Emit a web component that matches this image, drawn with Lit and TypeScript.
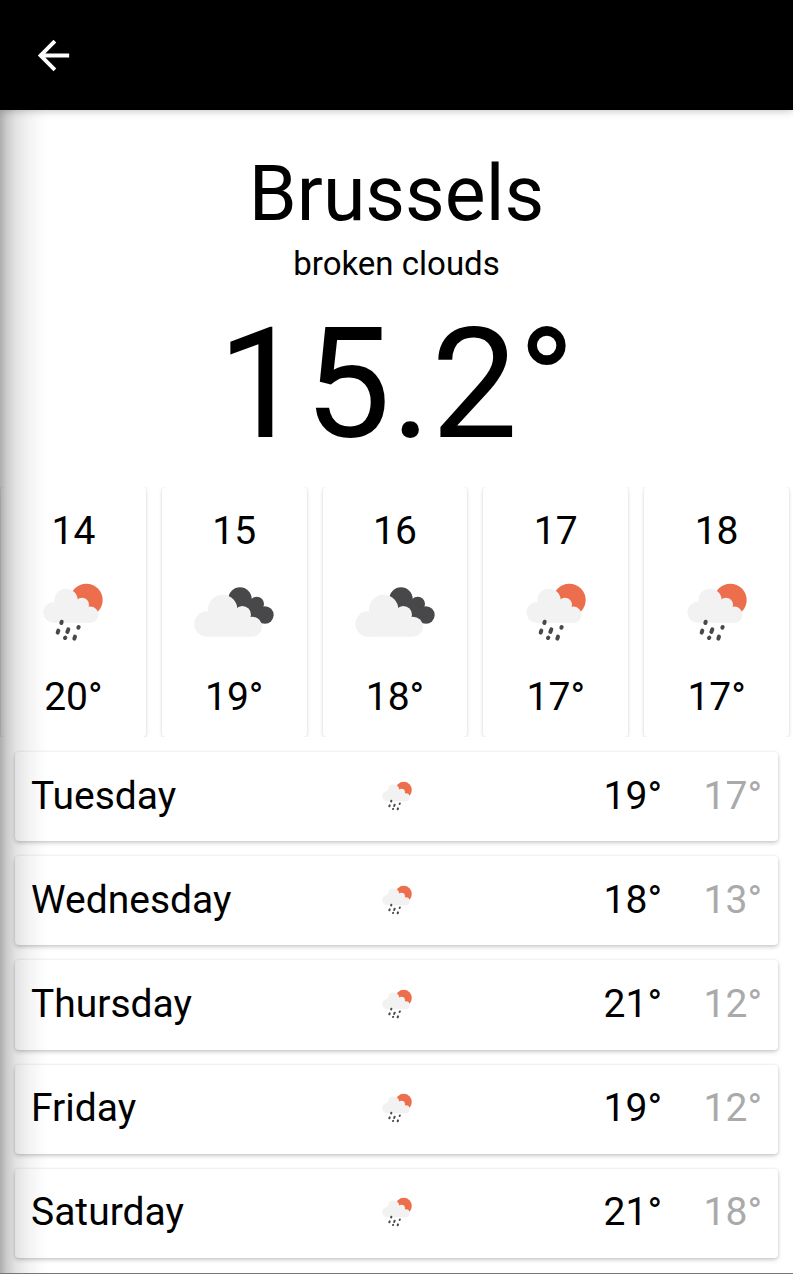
import { LitElement, html, css, svg } from "lit";
import { customElement, property } from "lit/decorators.js";

type Condition = "rain" | "clouds";

interface Hour {
  hour: string;
  condition: Condition;
  temp: string;
}

interface Day {
  name: string;
  condition: Condition;
  high: string;
  low: string;
}

const HOURS: Hour[] = [
  { hour: "14", condition: "rain", temp: "20°" },
  { hour: "15", condition: "clouds", temp: "19°" },
  { hour: "16", condition: "clouds", temp: "18°" },
  { hour: "17", condition: "rain", temp: "17°" },
  { hour: "18", condition: "rain", temp: "17°" },
];

const DAYS: Day[] = [
  { name: "Tuesday", condition: "rain", high: "19°", low: "17°" },
  { name: "Wednesday", condition: "rain", high: "18°", low: "13°" },
  { name: "Thursday", condition: "rain", high: "21°", low: "12°" },
  { name: "Friday", condition: "rain", high: "19°", low: "12°" },
  { name: "Saturday", condition: "rain", high: "21°", low: "18°" },
];

@customElement("weather-icon")
export class WeatherIcon extends LitElement {
  @property() condition: Condition = "rain";

  static styles = css`
    :host {
      display: block;
      width: 80px;
      aspect-ratio: 4 / 3;
    }
    .icon {
      display: block;
      width: 100%;
      height: 100%;
    }
    .sun {
      fill: #ec6e4c;
    }
    .cloud {
      fill: #f2f2f2;
    }
    .dark {
      fill: #48484a;
    }
    .drops {
      fill: none;
      stroke: #48484a;
      stroke-width: 12;
      stroke-linecap: round;
    }
  `;

  // Sun behind a cloud, with drops below it.
  private rain() {
    return svg`
      <circle class="sun" cx="160" cy="54" r="49"></circle>
      <g class="cloud">
        <circle cx="62" cy="91" r="31"></circle>
        <circle cx="99" cy="55" r="35"></circle>
        <circle cx="147" cy="68" r="21"></circle>
        <circle cx="172" cy="98" r="24.500"></circle>
        <path d="M62 122H172V90L150 60L120 50L80 60L62 75Z"></path>
      </g>
      <path class="drops" d="M86 119l-1 4M76 146l-2 6M106 142l-3 8M137 135l-1 2M97 167l-1 1M126 164l-2 6"></path>
    `;
  }

  // Dark cloud behind a light one.
  private clouds() {
    return svg`
      <g class="dark">
        <circle cx="138" cy="51" r="35"></circle>
        <circle cx="188" cy="66" r="22"></circle>
        <circle cx="213" cy="99" r="26"></circle>
        <path d="M138 51L168 58L188 66L213 99L204 124L170 112L138 80Z"></path>
      </g>
      <g class="cloud">
        <circle cx="39" cy="126" r="38"></circle>
        <circle cx="86" cy="82" r="44"></circle>
        <circle cx="145" cy="98" r="26"></circle>
        <circle cx="174" cy="134" r="30"></circle>
        <path d="M39 164H174V124L148 88L112 76L62 88L39 106Z"></path>
      </g>
    `;
  }

  render() {
    return html`
      <svg class="icon" viewBox="0 0 240 180" aria-hidden="true">
        ${this.condition === "rain" ? this.rain() : this.clouds()}
      </svg>
    `;
  }
}

@customElement("app-root")
export class AppRoot extends LitElement {
  static styles = css`
    :host {
      display: block;
      font-family: Roboto, sans-serif;
      color: #000;
      background: #fff;
    }
    * {
      box-sizing: border-box;
    }
    .page {
      position: relative;
      display: flex;
      flex-direction: column;
      min-height: 100vh;
      border-bottom: 1px solid #777;
      overflow: hidden;
    }
    .edge {
      position: absolute;
      inset: 0 auto 0 0;
      width: 48px;
      pointer-events: none;
      background: linear-gradient(
        to right,
        rgba(0, 0, 0, 0.32) 0,
        rgba(0, 0, 0, 0.2) 7px,
        rgba(0, 0, 0, 0.11) 16px,
        rgba(0, 0, 0, 0.05) 28px,
        rgba(0, 0, 0, 0.01) 42px,
        rgba(0, 0, 0, 0) 48px
      );
    }
    .bar {
      display: flex;
      align-items: center;
      height: 110px;
      padding: 1px 30px 0;
      background: #000;
      box-shadow: 0 1px 8px rgba(0, 0, 0, 0.24);
    }
    .back {
      display: block;
      padding: 0;
      border: 0;
      background: none;
      color: #fff;
      cursor: pointer;
    }
    .arrow {
      display: block;
      width: 47px;
      height: 47px;
      fill: currentColor;
    }
    .now {
      display: flex;
      flex-direction: column;
      align-items: center;
      padding: 38px 16px 12px;
    }
    .city,
    .summary,
    .temp {
      margin: 0;
      font-weight: 400;
    }
    .city {
      font-size: 77px;
      line-height: 92px;
    }
    .summary {
      margin: 4px 0 11px;
      font-size: 33px;
      line-height: 40px;
    }
    .temp {
      font-size: 154px;
      line-height: 180px;
    }
    .hours,
    .days {
      margin: 0;
      list-style: none;
    }
    .hours {
      display: grid;
      grid-template-columns: repeat(5, 1fr);
      gap: 16px;
      padding: 0 4px 0 1px;
      overflow: hidden;
      font-size: 39px;
      line-height: 48px;
    }
    .card {
      border-radius: 4px;
      background: #fff;
      box-shadow:
        0 2px 4px rgba(0, 0, 0, 0.2),
        0 0 3px rgba(0, 0, 0, 0.08);
    }
    .hour {
      display: flex;
      flex-direction: column;
      align-items: center;
      padding: 20px 0 16px;
      box-shadow:
        0 2px 4px rgba(0, 0, 0, 0.08),
        0 0 3px rgba(0, 0, 0, 0.12);
    }
    .sky {
      margin: 27px 0 31px;
    }
    .days {
      flex: 1;
      display: grid;
      grid-auto-rows: 1fr;
      gap: 15px;
      padding: 15px;
      font-size: 39px;
      line-height: 48px;
    }
    .day {
      display: grid;
      grid-template-columns: 1fr 40px 1fr;
      align-items: center;
      min-height: 88px;
      padding: 0 16px 2px;
    }
    .small {
      width: 40px;
    }
    .range {
      display: flex;
      justify-content: flex-end;
      text-align: right;
    }
    .low {
      width: 100px;
      color: #aaa;
    }
  `;

  render() {
    return html`
      <div class="page">
        <header class="bar">
          <button class="back" type="button" aria-label="Back">
            <svg class="arrow" viewBox="0 0 24 24" aria-hidden="true">
              <path d="M20 11H7.830l5.590-5.590L12 4l-8 8 8 8 1.410-1.410L7.830 13H20v-2z"></path>
            </svg>
          </button>
        </header>
        <section class="now">
          <h1 class="city">Brussels</h1>
          <p class="summary">broken clouds</p>
          <p class="temp">15.2°</p>
        </section>
        <ul class="hours">
          ${HOURS.map(
            (h) => html`
              <li class="card hour">
                <span>${h.hour}</span>
                <weather-icon class="sky" .condition=${h.condition}></weather-icon>
                <span>${h.temp}</span>
              </li>
            `,
          )}
        </ul>
        <ul class="days">
          ${DAYS.map(
            (d) => html`
              <li class="card day">
                <span>${d.name}</span>
                <weather-icon class="small" .condition=${d.condition}></weather-icon>
                <span class="range">
                  <span>${d.high}</span>
                  <span class="low">${d.low}</span>
                </span>
              </li>
            `,
          )}
        </ul>
        <div class="edge"></div>
      </div>
    `;
  }
}
